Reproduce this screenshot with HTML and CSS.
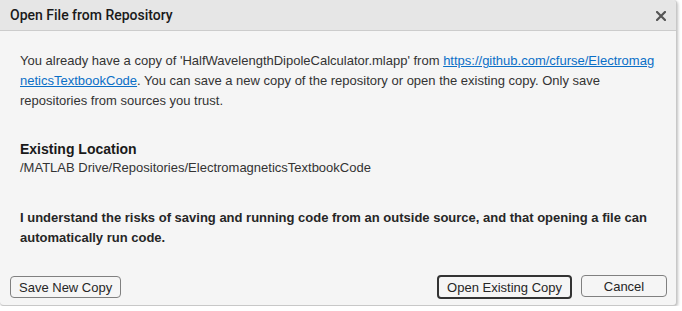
FILE: index.html
```html
<!DOCTYPE html>
<html>
<head>
<meta charset="utf-8">
<link rel="stylesheet" href="styles.css">
</head>
<body>
<div class="dialog">
  <div class="titlebar">
    <span class="title">Open File from Repository</span>
    <svg class="close" width="10" height="10" viewBox="0 0 10 10"><path d="M1 1 L9 9 M9 1 L1 9" stroke="#555" stroke-width="2.2" stroke-linecap="square"/></svg>
  </div>
  <div class="body">
    <p class="msg">You already have a copy of 'HalfWavelengthDipoleCalculator.mlapp' from <a class="link" href="#">https://github.com/cfurse/ElectromagneticsTextbookCode</a>. You can save a new copy of the repository or open the existing copy. Only save repositories from sources you trust.</p>
    <div class="loc">
      <div class="loc-label">Existing Location</div>
      <div class="loc-path">/MATLAB Drive/Repositories/ElectromagneticsTextbookCode</div>
    </div>
    <p class="warn">I understand the risks of saving and running code from an outside source, and that opening a file can automatically run code.</p>
  </div>
  <div class="footer">
    <button class="btn">Save New Copy</button>
    <div class="right">
      <button class="btn primary">Open Existing Copy</button>
      <button class="btn cancel">Cancel</button>
    </div>
  </div>
</div>
</body>
</html>
```
FILE: styles.css
```css
html, body {
  margin: 0;
  padding: 0;
  background: #ffffff;
}
body {
  font-family: "Liberation Sans", Arial, sans-serif;
  color: #333333;
}
.dialog {
  width: 677px;
  height: 306px;
  background: #f5f5f5;
  border-right: 1px solid #c8c8c8;
  border-bottom: 1px solid #c8c8c8;
  border-radius: 0 4px 4px 4px;
  box-shadow: 1px 1px 3px rgba(0,0,0,0.25);
  display: flex;
  flex-direction: column;
  box-sizing: border-box;
}
.titlebar {
  height: 31px;
  box-sizing: border-box;
  background: #e6e6e6;
  border-bottom: 1px solid #cccccc;
  display: flex;
  align-items: center;
  justify-content: space-between;
  padding: 0 10px 0 10px;
  border-radius: 0 4px 0 0;
}
.title {
  font-size: 14px;
  font-weight: 500;
  color: #1a1a1a;
  font-family: Roboto, "Liberation Sans", sans-serif;
}
.close {
  margin-top: 2px;
}
.body {
  flex: 1;
  padding: 20px 20px 0 20px;
  font-size: 13px;
  line-height: 20px;
}
.msg {
  margin: 0;
}
.link {
  color: #0b6fc7;
  text-decoration: underline;
  word-break: break-all;
}
.loc {
  margin-top: 28px;
}
.loc-label {
  font-weight: bold;
  font-size: 14px;
  color: #1a1a1a;
  line-height: 20px;
}
.loc-path {
  line-height: 18px;
}
.warn {
  margin: 31px 0 0 0;
  font-weight: bold;
  color: #262626;
}
.footer {
  display: flex;
  justify-content: space-between;
  align-items: center;
  padding: 0 9px 6px 10px;
}
.right {
  display: flex;
  gap: 9px;
}
.btn {
  font-family: "Liberation Sans", Arial, sans-serif;
  font-size: 13px;
  color: #262626;
  background: #f5f5f5;
  border: 1px solid #808080;
  border-radius: 4px;
  height: 22px;
  padding: 0 8px;
}
.primary {
  border: 2px solid #333333;
  height: 24px;
  padding: 0 8px;
}
.cancel {
  width: 86px;
}
```
